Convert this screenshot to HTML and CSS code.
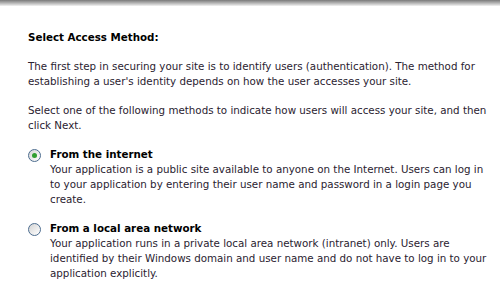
FILE: index.html
```html
<!DOCTYPE html>
<html>
<head>
<meta charset="utf-8">
<link rel="stylesheet" href="styles.css">
</head>
<body>
<div class="topbar"></div>
<div class="content">
  <div class="heading">Select Access Method:</div>
  <p class="para">The first step in securing your site is to identify users (authentication). The method for<br>establishing a user's identity depends on how the user accesses your site.</p>
  <p class="para">Select one of the following methods to indicate how users will access your site, and then<br>click Next.</p>
  <div class="option">
    <span class="radio checked"><span class="dot"></span></span>
    <div class="opt-body">
      <div class="opt-title">From the internet</div>
      <div class="opt-desc">Your application is a public site available to anyone on the Internet. Users can log in<br>to your application by entering their user name and password in a login page you<br>create.</div>
    </div>
  </div>
  <div class="option">
    <span class="radio"></span>
    <div class="opt-body">
      <div class="opt-title">From a local area network</div>
      <div class="opt-desc">Your application runs in a private local area network (intranet) only. Users are<br>identified by their Windows domain and user name and do not have to log in to your<br>application explicitly.</div>
    </div>
  </div>
</div>
</body>
</html>
```
FILE: styles.css
```css
html, body {
  margin: 0;
  padding: 0;
  background: #fff;
}
body {
  font-family: "DejaVu Sans", Verdana, sans-serif;
  font-size: 10.3px;
  line-height: 15px;
  color: #2a2230;
  overflow: hidden;
}
.topbar {
  height: 6px;
  background: linear-gradient(#7a7a7a, #a8a8a8 40%, #d8d8d8 80%, #f4f4f4);
}
.content {
  padding: 24px 0 0 28px;
  white-space: nowrap;
}
.heading {
  font-weight: bold;
  color: #000;
  margin: 0;
}
.para {
  margin: 14px 0 0 0;
}
.option {
  display: flex;
  gap: 8px;
  margin-top: 14px;
}
.radio {
  flex: none;
  width: 11px;
  height: 11px;
  margin-top: 2px;
  margin-left: 0;
  margin-right: 1px;
  border: 1px solid #4d6d8f;
  border-radius: 50%;
  background: linear-gradient(135deg, #d4d4d4, #fff);
  display: flex;
  align-items: center;
  justify-content: center;
}
.dot {
  width: 5px;
  height: 5px;
  border-radius: 50%;
  background: #2f9e2f;
}
.opt-title {
  font-weight: bold;
  color: #000;
}
```
